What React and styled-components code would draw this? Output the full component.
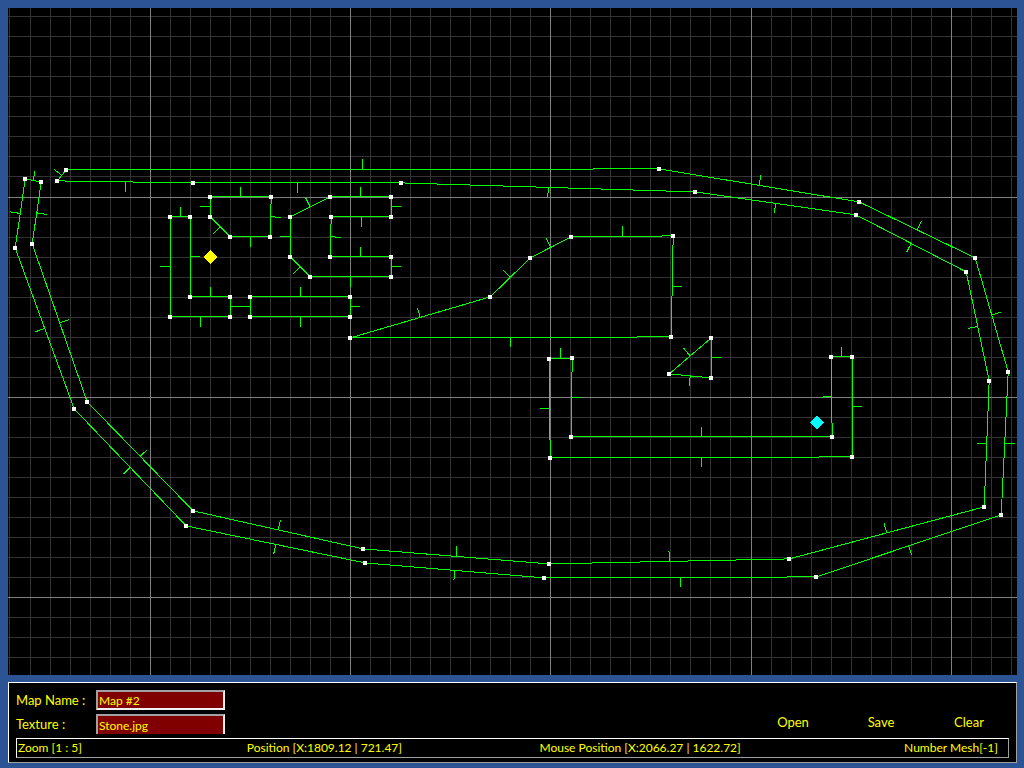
import React, { useState } from "react";
import styled, { createGlobalStyle } from "styled-components";

const GlobalStyle = createGlobalStyle`
  * { box-sizing: border-box; }
  body {
    margin: 0;
    background: #2c5393;
    color: #ffff00;
    font-family: Lato, "Open Sans", sans-serif;
  }
`;

const Editor = styled.main`
  display: flex;
  flex-direction: column;
  gap: 7px;
  min-height: 100vh;
  padding: 8px 7px 5px 8px;
`;

const Viewport = styled.section`
  display: flex;
  flex: 1 1 0;
  min-height: 240px;
  background: #000;
  overflow: hidden;
`;

const MapCanvas = styled.svg`
  display: block;
  flex: 1;
  min-width: 0;
  shape-rendering: crispEdges;
`;

const Panel = styled.section`
  padding: 7px 7px 4px;
  background: #000;
  border: 1px solid;
  border-color: #fff #a0a0a0 #a0a0a0 #fff;
`;

const Toolbar = styled.div`
  display: flex;
  justify-content: space-between;
  align-items: flex-end;
`;

const Fields = styled.div`
  display: grid;
  grid-template-columns: 80px 129px;
  row-gap: 4px;
  padding-bottom: 4px;
`;

const FieldLabel = styled.label`
  font-size: 13px;
  line-height: 20px;
  white-space: pre;
`;

const FieldInput = styled.input`
  width: 100%;
  height: 20px;
  padding: ${(p) => (p.$cut ? "1px 1px 0" : "0 1px")};
  border: 2px solid;
  border-color: #a0a0a0 #f0f0f0 #f0f0f0 #a0a0a0;
  border-bottom-width: ${(p) => (p.$cut ? 0 : 2)}px;
  border-radius: 0;
  background: #800000;
  color: inherit;
  font: inherit;
  font-size: 12px;
  line-height: 16px;
  outline: none;
`;

const Actions = styled.div`
  display: flex;
  gap: 8px;
`;

const ActionButton = styled.button`
  width: 80px;
  height: 32px;
  padding: 0;
  border: 0;
  background: none;
  color: inherit;
  font: inherit;
  font-size: 13px;
  cursor: pointer;
`;

const StatusBar = styled.footer`
  display: grid;
  grid-template-columns: 229fr 293fr 365fr 104fr;
  height: 20px;
  padding-left: 1px;
  border: 1px solid;
  border-color: #fff #a0a0a0 #a0a0a0 #fff;
  font-size: 12px;
  line-height: 18px;
  white-space: nowrap;
`;

const range = (from, to, step) => {
  const values = [];
  for (let v = from; v <= to; v += step) values.push(v);
  return values;
};

const columns = [9, ...range(30, 730, 20), ...range(751, 1011, 20)];
const rows = [...range(16, 176, 20), ...range(197, 657, 20)];
const majorColumns = [150, 350, 550, 751, 951];
const majorRows = [197, 397, 597];

// Closed wall outlines, listed clockwise so that edge normals point outwards.
const meshes = [
  [
    [15, 248], [25, 179], [41, 182], [32, 244], [87, 402], [193, 511], [363, 549],
    [549, 564], [789, 559], [984, 507], [989, 381], [966, 272], [856, 215], [695, 192],
    [401, 183], [193, 183], [57, 181], [66, 170], [659, 169], [859, 202], [975, 258],
    [1008, 372], [1001, 515], [816, 577], [544, 578], [365, 563], [186, 526], [74, 409],
  ],
  [[210, 197], [271, 197], [270, 237], [230, 237], [210, 217]],
  [
    [290, 217], [330, 197], [391, 197], [391, 217], [331, 217],
    [330, 257], [391, 257], [391, 277], [310, 277], [290, 257],
  ],
  [[170, 217], [190, 217], [190, 297], [230, 297], [230, 317], [170, 317]],
  [[250, 297], [350, 297], [350, 317], [250, 317]],
  [[350, 338], [490, 297], [530, 258], [571, 237], [673, 236], [671, 337]],
  [[669, 374], [711, 338], [711, 378]],
  [[549, 359], [572, 358], [571, 437], [832, 437], [831, 357], [852, 357], [852, 457], [550, 458]],
];

const NORMAL_LENGTH = 10;

function edgePath(points) {
  return points
    .map(([x1, y1], i) => {
      const [x2, y2] = points[(i + 1) % points.length];
      const dx = x2 - x1;
      const dy = y2 - y1;
      const length = Math.hypot(dx, dy);
      const mx = (x1 + x2) / 2;
      const my = (y1 + y2) / 2;
      const nx = mx + (dy / length) * NORMAL_LENGTH;
      const ny = my - (dx / length) * NORMAL_LENGTH;
      return `M${x1} ${y1}L${x2} ${y2}M${mx} ${my}L${nx} ${ny}`;
    })
    .join("");
}

function Grid() {
  return (
    <g>
      <g fill="#333333">
        {columns.map((x) => <rect key={"c" + x} x={x} y={8} width={1} height={667} />)}
        {rows.map((y) => <rect key={"r" + y} x={8} y={y} width={1009} height={1} />)}
      </g>
      <g fill="#808080">
        {majorColumns.map((x) => <rect key={"c" + x} x={x} y={8} width={1} height={667} />)}
        {majorRows.map((y) => <rect key={"r" + y} x={8} y={y} width={1009} height={1} />)}
      </g>
    </g>
  );
}

function Mesh({ points }) {
  return (
    <g>
      <path d={edgePath(points)} transform="translate(0.2 -0.1)" fill="none" stroke="#00ff00" strokeWidth={1} />
      {points.map(([x, y]) => (
        <rect key={`${x}-${y}`} x={x - 2} y={y - 2} width={4} height={4} fill="#fff" />
      ))}
    </g>
  );
}

function Marker({ x, y, color }) {
  return <path d={`M${x} ${y - 7}l7 7l-7 7l-7 -7z`} fill={color} />;
}

export default function App() {
  const [name, setName] = useState("Map #2");
  const [texture, setTexture] = useState("Stone.jpg");
  return (
    <>
      <GlobalStyle />
      <Editor>
        <Viewport>
          <MapCanvas viewBox="8 8 1009 667" preserveAspectRatio="xMinYMin slice" role="img" aria-label="Map">
            <Grid />
            {meshes.map((points, i) => <Mesh key={i} points={points} />)}
            <Marker x={210} y={257} color="#ffff00" />
            <Marker x={817} y={422.5} color="#00ffff" />
          </MapCanvas>
        </Viewport>
        <Panel>
          <Toolbar>
            <Fields>
              <FieldLabel htmlFor="map-name">Map Name :</FieldLabel>
              <FieldInput id="map-name" value={name} onChange={(e) => setName(e.target.value)} />
              <FieldLabel htmlFor="texture">Texture :</FieldLabel>
              <FieldInput id="texture" $cut value={texture} onChange={(e) => setTexture(e.target.value)} />
            </Fields>
            <Actions>
              <ActionButton type="button">Open</ActionButton>
              <ActionButton type="button">Save</ActionButton>
              <ActionButton type="button">Clear</ActionButton>
            </Actions>
          </Toolbar>
          <StatusBar>
            <span>Zoom [1 : 5]</span>
            <span>Position [X:1809.12 | 721.47]</span>
            <span>Mouse Position [X:2066.27 | 1622.72]</span>
            <span>Number Mesh[-1]</span>
          </StatusBar>
        </Panel>
      </Editor>
    </>
  );
}
